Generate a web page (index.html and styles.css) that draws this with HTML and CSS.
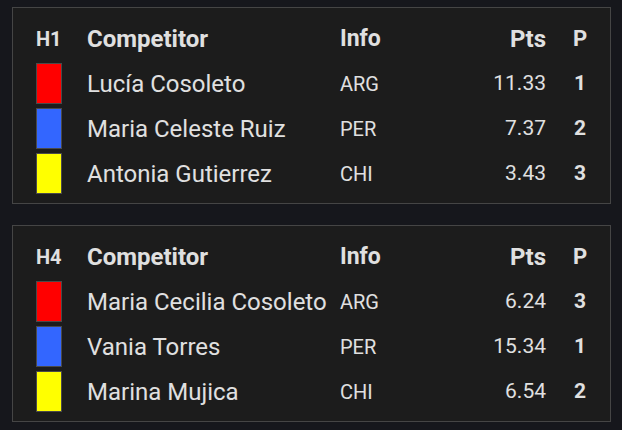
FILE: index.html
```html
<!DOCTYPE html>
<html>
<head>
<meta charset="utf-8">
<link rel="stylesheet" href="styles.css">
</head>
<body>
<section class="panel">
  <div class="row head">
    <div class="heat">H1</div>
    <div class="name">Competitor</div>
    <div class="info">Info</div>
    <div class="pts">Pts</div>
    <div class="pos">P</div>
  </div>
  <div class="row">
    <div><span class="sw red"></span></div>
    <div class="name">Lucía Cosoleto</div>
    <div class="info">ARG</div>
    <div class="pts">11.33</div>
    <div class="pos">1</div>
  </div>
  <div class="row">
    <div><span class="sw blue"></span></div>
    <div class="name">Maria Celeste Ruiz</div>
    <div class="info">PER</div>
    <div class="pts">7.37</div>
    <div class="pos">2</div>
  </div>
  <div class="row">
    <div><span class="sw yellow"></span></div>
    <div class="name">Antonia Gutierrez</div>
    <div class="info">CHI</div>
    <div class="pts">3.43</div>
    <div class="pos">3</div>
  </div>
</section>
<section class="panel">
  <div class="row head">
    <div class="heat">H4</div>
    <div class="name">Competitor</div>
    <div class="info">Info</div>
    <div class="pts">Pts</div>
    <div class="pos">P</div>
  </div>
  <div class="row">
    <div><span class="sw red"></span></div>
    <div class="name">Maria Cecilia Cosoleto</div>
    <div class="info">ARG</div>
    <div class="pts">6.24</div>
    <div class="pos">3</div>
  </div>
  <div class="row">
    <div><span class="sw blue"></span></div>
    <div class="name">Vania Torres</div>
    <div class="info">PER</div>
    <div class="pts">15.34</div>
    <div class="pos">1</div>
  </div>
  <div class="row">
    <div><span class="sw yellow"></span></div>
    <div class="name">Marina Mujica</div>
    <div class="info">CHI</div>
    <div class="pts">6.54</div>
    <div class="pos">2</div>
  </div>
</section>
</body>
</html>
```
FILE: styles.css
```css
html, body {
  margin: 0;
  background: #16171c;
}
body {
  padding: 7px 0 0 12px;
  font-family: Roboto, "Liberation Sans", sans-serif;
  color: #e0e0e0;
}
.panel {
  box-sizing: border-box;
  width: 599px;
  background: #1c1c1c;
  border: 1px solid #454545;
  padding: 10px 5px 9px 23px;
  margin-bottom: 21px;
  display: flex;
  flex-direction: column;
  gap: 4px;
}
.row {
  display: grid;
  grid-template-columns: 51px 253px 100px 106px 10px 48px;
  height: 41px;
  align-items: center;
  font-size: 21px;
}
.row > div { line-height: 1; }
.row .pos { grid-column: 6; text-align: center; font-weight: 700; }
.name { font-size: 24px; }
.pts { text-align: right; }
.info { font-size: 20px; }
.head { font-weight: 700; font-size: 23px; }
.head .name { font-size: 24px; }
.head .info { font-size: 23px; }
.head .pts { font-size: 24px; }
.head .pos { font-size: 22px; }
.head .heat { font-size: 20px; }
.sw {
  display: block;
  box-sizing: border-box;
  width: 26px;
  height: 41px;
  border: 1px solid #4a4a4a;
}
.red { background: #ff0000; }
.blue { background: #3366ff; }
.yellow { background: #ffff00; }
```
